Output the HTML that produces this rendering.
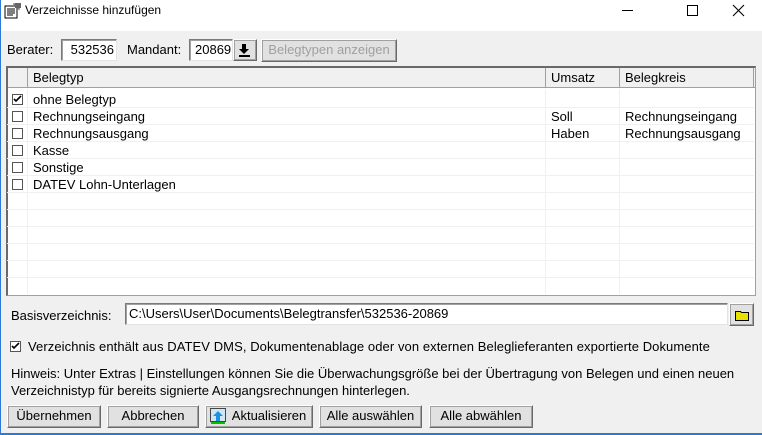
<!DOCTYPE html>
<html><head><meta charset="utf-8"><style>
*{box-sizing:border-box;margin:0;padding:0}
body{width:762px;height:435px;background:#f0f0f0;font-family:"Liberation Sans",Arial,sans-serif;font-size:13px;color:#000;position:relative;overflow:hidden}
.a{position:absolute;white-space:nowrap}
.title{left:0;top:0;width:762px;height:31px;background:#fff}
.inp{background:#fff;border:1px solid #7a7a7a;border-right-color:#e3e3e3;border-bottom-color:#e3e3e3;box-shadow:inset 1px 1px 0 #a0a0a0}
.btn{background:#e1e1e1;border:1px solid #fff;border-right-color:#696969;border-bottom-color:#696969;box-shadow:1px 1px 0 #a0a0a0 inset,-1px -1px 0 #a0a0a0 inset;text-align:center;line-height:20px}
.cb{width:11px;height:11px;border:1px solid #555;background:#fff}
.hl{left:7px;width:747px;height:1px;background:#f0f0f0}
.vl{width:1px;background:#f0f0f0}
</style></head><body>
<div class="a title"></div>
<div class="a" style="left:0;top:0;width:1px;height:435px;background:#2b7bd6"></div>
<div class="a" style="left:0;top:433px;width:762px;height:2px;background:#2b7bd6"></div>
<svg class="a" style="left:4px;top:3px" width="18" height="16" viewBox="0 0 18 16"><rect x="1" y="3" width="12" height="12" fill="#fff" stroke="#000"/><path d="M3 6h8M3 8h8M3 10h8M3 12h6" stroke="#000"/><path d="M9 1l6 0 0 6" stroke="#555" fill="#aaa"/><rect x="11" y="0" width="6" height="5" fill="#666"/></svg>
<div class="a" style="left:25px;top:3px;font-size:12px">Verzeichnisse hinzufügen</div>
<div class="a" style="left:622px;top:10px;width:11px;height:1px;background:#000"></div>
<div class="a" style="left:687px;top:5px;width:11px;height:11px;border:1px solid #000"></div>
<svg class="a" style="left:732px;top:4px" width="13" height="13"><path d="M1 1L12 12M12 1L1 12" stroke="#000" stroke-width="1.1"/></svg>

<div class="a" style="left:7px;top:42px">Berater:</div>
<div class="a inp" style="left:61px;top:39px;width:56px;height:22px;text-align:right;padding:2px 2px 0 0">532536</div>
<div class="a" style="left:127px;top:42px">Mandant:</div>
<div class="a inp" style="left:189px;top:39px;width:44px;height:22px;padding:2px 0 0 5px">20869</div>
<div class="a btn" style="left:233px;top:39px;width:24px;height:22px"></div>
<svg class="a" style="left:238px;top:44px" width="14" height="13"><path d="M4 0h4v5h3L6 10 1 5h3z" fill="#000"/><rect x="1" y="11" width="11" height="2" fill="#000"/></svg>
<div class="a btn" style="left:261px;top:39px;width:136px;height:23px;color:#a0a0a0">Belegtypen anzeigen</div>

<div class="a" style="left:6px;top:66px;width:750px;height:230px;background:#fff;border:1px solid #a0a0a0;border-left:2px solid #696969;border-top:2px solid #696969"></div>
<div class="a" style="left:8px;top:68px;width:747px;height:20px;background:#f0f0f0;border-bottom:1px solid #a0a0a0"></div>
<div class="a" style="left:27px;top:68px;width:1px;height:20px;background:#a0a0a0"></div>
<div class="a" style="left:545px;top:68px;width:1px;height:20px;background:#a0a0a0"></div>
<div class="a" style="left:619px;top:68px;width:1px;height:20px;background:#a0a0a0"></div>
<div class="a" style="left:753px;top:68px;width:1px;height:20px;background:#a0a0a0"></div>
<div class="a" style="left:33px;top:70px">Belegtyp</div>
<div class="a" style="left:551px;top:70px">Umsatz</div>
<div class="a" style="left:625px;top:70px">Belegkreis</div>

<div class="a vl" style="left:27px;top:89px;height:205px"></div>
<div class="a vl" style="left:545px;top:89px;height:205px"></div>
<div class="a vl" style="left:619px;top:89px;height:205px"></div>
<div class="a hl" style="top:107px"></div><div class="a hl" style="top:124px"></div><div class="a hl" style="top:141px"></div><div class="a hl" style="top:158px"></div><div class="a hl" style="top:175px"></div><div class="a hl" style="top:192px"></div><div class="a hl" style="top:209px"></div><div class="a hl" style="top:226px"></div><div class="a hl" style="top:243px"></div><div class="a hl" style="top:260px"></div><div class="a hl" style="top:277px"></div>

<div class="a cb" style="left:12px;top:94px"></div>
<svg class="a" style="left:13px;top:95px" width="9" height="9"><path d="M1 4l2 2 5-5" stroke="#000" stroke-width="1.6" fill="none"/></svg>
<div class="a" style="left:33px;top:92px">ohne Belegtyp</div>
<div class="a cb" style="left:12px;top:111px"></div><div class="a" style="left:33px;top:109px">Rechnungseingang</div>
<div class="a" style="left:551px;top:109px">Soll</div><div class="a" style="left:625px;top:109px">Rechnungseingang</div>
<div class="a cb" style="left:12px;top:128px"></div><div class="a" style="left:33px;top:126px">Rechnungsausgang</div>
<div class="a" style="left:551px;top:126px">Haben</div><div class="a" style="left:625px;top:126px">Rechnungsausgang</div>
<div class="a cb" style="left:12px;top:145px"></div><div class="a" style="left:33px;top:143px">Kasse</div>
<div class="a cb" style="left:12px;top:162px"></div><div class="a" style="left:33px;top:160px">Sonstige</div>
<div class="a cb" style="left:12px;top:179px"></div><div class="a" style="left:33px;top:177px">DATEV Lohn-Unterlagen</div>

<div class="a" style="left:11px;top:308px">Basisverzeichnis:</div>
<div class="a inp" style="left:125px;top:303px;width:603px;height:22px;padding:2px 0 0 3px">C:\Users\User\Documents\Belegtransfer\532536-20869</div>
<div class="a btn" style="left:729px;top:303px;width:25px;height:23px"></div>
<svg class="a" style="left:735px;top:309px" width="15" height="12"><path d="M0.5 2.5h5l1 1h7v8h-13z" fill="#e8e000" stroke="#000"/></svg>

<div class="a cb" style="left:10px;top:341px"></div>
<svg class="a" style="left:11px;top:342px" width="9" height="9"><path d="M1 4l2 2 5-5" stroke="#000" stroke-width="1.6" fill="none"/></svg>
<div class="a" style="left:28px;top:339px;font-size:13px;letter-spacing:0.08px">Verzeichnis enthält aus DATEV DMS, Dokumentenablage oder von externen Beleglieferanten exportierte Dokumente</div>
<div class="a" style="left:11px;top:365px;line-height:17px;font-size:13px">Hinweis: Unter Extras | Einstellungen können Sie die Überwachungsgröße bei der Übertragung von Belegen und einen neuen<br>Verzeichnistyp für bereits signierte Ausgangsrechnungen hinterlegen.</div>

<div class="a btn" style="left:7px;top:405px;width:94px;height:23px">Übernehmen</div>
<div class="a btn" style="left:107px;top:405px;width:92px;height:23px">Abbrechen</div>
<div class="a btn" style="left:205px;top:405px;width:108px;height:23px;padding-left:20px">Aktualisieren</div>
<svg class="a" style="left:210px;top:408px" width="16" height="17"><rect x="0.5" y="0.5" width="15" height="13" fill="#cfe6f7" stroke="#444"/><path d="M8 3l5 5h-3v5H6V8H3z" fill="#1e90e0"/><rect x="1" y="14" width="14" height="2" fill="#00c000"/></svg>
<div class="a btn" style="left:319px;top:405px;width:103px;height:23px">Alle auswählen</div>
<div class="a btn" style="left:429px;top:405px;width:104px;height:23px">Alle abwählen</div>
</body></html>
